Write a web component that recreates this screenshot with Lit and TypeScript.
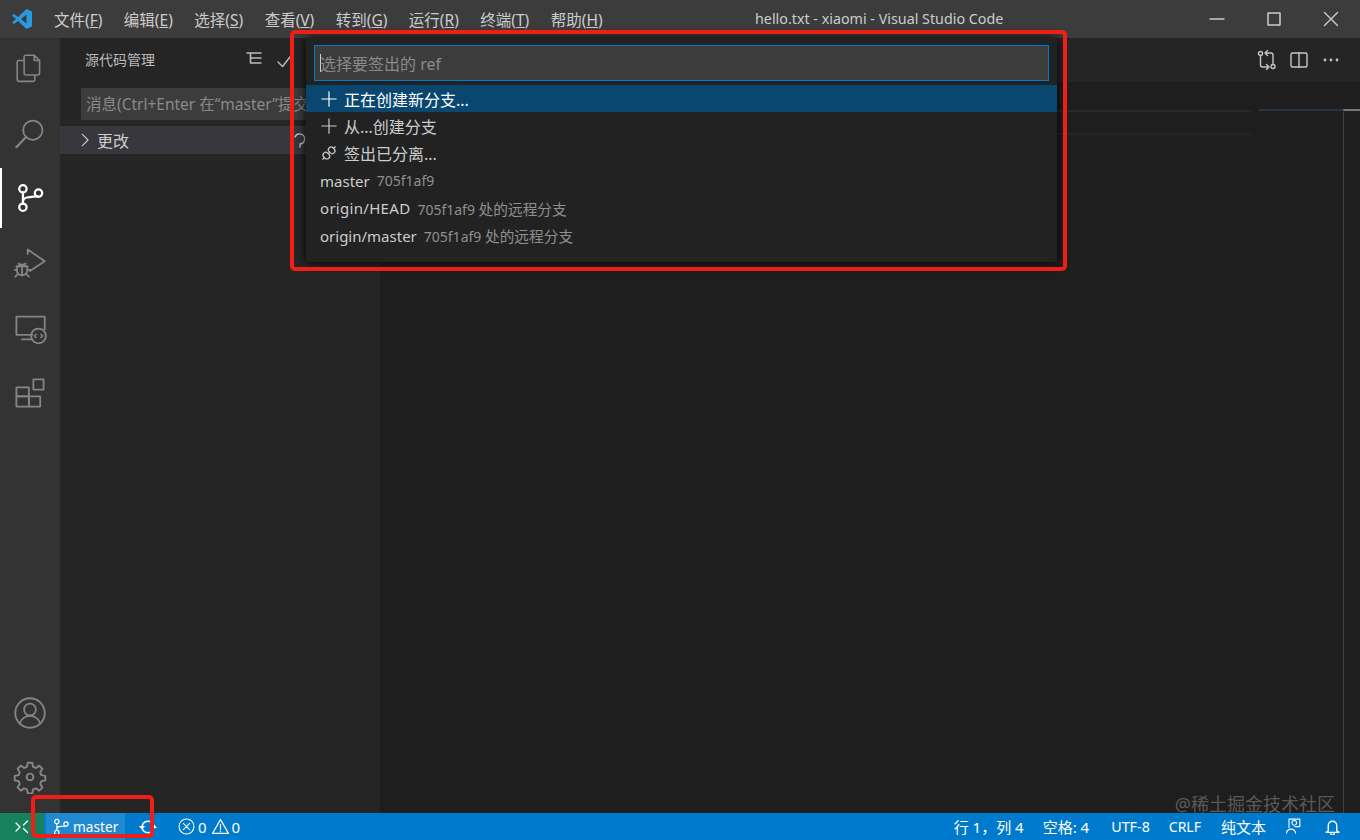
import { LitElement, html, css, svg } from "lit";
import { customElement } from "lit/decorators.js";

const I = (size: number, body: unknown, vb = 24) => html`<svg class="ic" width=${size} height=${size} viewBox="0 0 ${vb} ${vb}" fill="none" stroke="currentColor" stroke-width="1.2" stroke-linecap="round" stroke-linejoin="round">${body}</svg>`;

const branch = svg`<circle cx="7" cy="5.500" r="2.600"/><circle cx="7" cy="18.500" r="2.600"/><circle cx="18" cy="8.500" r="2.600"/><path d="M7 8v8M7 15c0-3 2-3.500 5-3.700 3-.2 5-.7 6-.2"/>`;

@customElement("app-root")
export class AppRoot extends LitElement {
  static styles = css`
    :host { display: block; width: 1360px; height: 840px; position: relative; overflow: hidden; font-family: "Noto Sans", "Noto Sans CJK SC", sans-serif; color: #ccc; background: #1e1e1e; }
    .ic { display: block; flex: none; }
    .title { height: 38px; background: #3c3c3c; display: flex; align-items: center; position: relative; font-size: 14px; color: #ccc; }
    .logo { width: 54px; padding-left: 11px; box-sizing: border-box; }
    .menu { display: flex; gap: 21.500px; font-size: 15.500px; }
    .menu span { white-space: nowrap; }
    .menu u { text-underline-offset: 1px; }
    .wintitle { position: absolute; left: 755px; top: 9px; font-size: 14.300px; line-height: 19px; color: #ccc; white-space: nowrap; }
    .winbtns { position: absolute; right: 1px; top: 0; display: flex; height: 38px; align-items: center; }
    .winbtns div { width: 57px; display: flex; justify-content: center; color: #ccc; }
    .main { display: flex; height: 775px; }
    .activity { width: 60px; background: #333; display: flex; flex-direction: column; color: #858585; flex: none; }
    .act { height: 65px; display: flex; align-items: center; justify-content: center; position: relative; flex: none; }
    .act .ic { margin-top: -6px; }
    .act.low .ic { margin-top: 4px; }
    .act.on { color: #fff; }
    .act.on::before { content: ""; position: absolute; left: 0; top: 0; bottom: 5px; width: 2px; background: #fff; }
    .spacer { flex: 1; }
    .side { width: 320px; background: #252526; display: flex; flex-direction: column; flex: none; }
    .sidehead { height: 44px; box-sizing: border-box; padding: 0 0 2px 25px; display: flex; align-items: center; font-size: 14px; position: relative; color: #bbb; }
    .t1 { position: absolute; left: 186px; top: 13px; }
    .t2 { position: absolute; left: 217px; top: 15px; }
    .input { margin: 6px 0 0 21px; height: 32px; background: #3c3c3c; font-size: 15.500px; line-height: 32px; color: #8a8a8a; padding-left: 5px; white-space: nowrap; overflow: hidden; }
    .changes { margin-top: 6px; height: 28px; background: #37373d; display: flex; align-items: center; font-size: 16px; color: #ccc; padding-left: 18px; gap: 5px; position: relative; }
    .undo { position: absolute; left: 231px; top: 6px; }
    .editor { flex: 1; display: flex; flex-direction: column; position: relative; background: #1e1e1e; }
    .tabs { height: 44px; background: #252526; display: flex; justify-content: flex-end; align-items: center; gap: 12px; padding-right: 19px; color: #c5c5c5; flex: none; }
    .crumb { height: 28px; flex: none; }
    .line { height: 2px; background: #292929; flex: none; width: 871px; }
    .line.two { margin-top: 21px; background: #262626; }
    .rtop { position: absolute; left: 879px; right: 17px; top: 71px; height: 2px; background: #2a3340; }
    .rtop2 { position: absolute; right: 0; top: 71px; width: 17px; height: 2px; background: #777; }
    .ruler { position: absolute; right: 16px; top: 72px; bottom: 0; width: 1px; background: #404040; }
    .status { height: 27px; background: #007acc; display: flex; align-items: center; font-size: 14px; color: #fff; position: relative; }
    .remote { width: 44px; height: 27px; background: #16825d; display: flex; align-items: center; justify-content: center; flex: none; }
    .st-branch { height: 27px; margin-left: 2px; width: 79px; background: #1f8ad2; display: flex; align-items: center; padding-left: 5px; gap: 2px; box-sizing: border-box; flex: none; font-size: 13.700px; }
    .st-sync { margin-left: 13px; flex: none; }
    .st-err { margin-left: 20px; display: flex; align-items: center; gap: 3px; font-size: 15px; }
    .st-err .warn { margin-left: 2px; }
    .st-right { margin-left: auto; display: flex; align-items: center; height: 27px; }
    .st-right span { white-space: nowrap; }
    .st-right .cjk { font-size: 15px; }
    .st-right .utf { font-size: 14.300px; }
    .m18 { margin-right: 18px; }
    .m19 { margin-right: 19px; }
    .m20 { margin-right: 20px; }
    .m22 { margin-right: 22px; }
    .watermark { position: absolute; right: 25px; top: 794px; font-size: 18px; line-height: 20px; color: rgba(128,128,128,.62); white-space: nowrap; }
    .qp { position: absolute; left: 306px; top: 38px; width: 751px; height: 224px; background: #222223; box-shadow: 0 0 10px #000; }
    .qp-in { margin: 7px 8px 0 8px; height: 36px; box-sizing: border-box; border: 1px solid #007acc; background: #3c3c3c; display: flex; align-items: center; padding-left: 5px; font-size: 16px; color: #8a8a8a; }
    .caret { width: 1px; height: 18px; background: #ccc; margin-right: -1px; flex: none; }
    .rows { margin-top: 4px; }
    .row { height: 27.400px; display: flex; align-items: center; padding-left: 14px; font-size: 15px; color: #ccc; white-space: nowrap; }
    .row.big { font-size: 16px; }
    .row.sel { background: #094771; color: #fff; }
    .row .i { width: 24px; flex: none; display: flex; }
    .row .wide { letter-spacing: .3px; }
    .row em { font-style: normal; color: #8f8f8f; margin-left: 7px; font-size: 14px; }
    .row em b { font-weight: 400; font-size: 14.700px; }
    .red { position: absolute; border: 4px solid #f01e14; border-radius: 5px; box-sizing: border-box; pointer-events: none; }
    .red.a { left: 290px; top: 30px; width: 777px; height: 241px; }
    .red.b { left: 31px; top: 795px; width: 123px; height: 43px; }
  `;

  render() {
    const plus = I(18, svg`<path d="M12 2.500v19M2.500 12h19" stroke-width="1.600"/>`);
    const plug = I(18, svg`<g transform="rotate(-45 9 9)" stroke-width="1.200"><rect x="2.500" y="5.500" width="5.500" height="7" rx="2.600"/><rect x="10" y="5.500" width="5.500" height="7" rx="2.600"/><path d="M8 9h2M.2 9h2.300M15.500 9h2.300"/></g>`, 18);
    return html`
      <div class="title">
        <div class="logo"><svg class="ic" width="22" height="22" viewBox="0 0 22 22"><path d="M15.500 1L21 3.500v15L15.500 21 7 13l-4 3-2-1.500L5 11 1 7.500 3 6l4 3z" fill="#2a9ae0"/><path d="M15.500 6.500L10 11l5.500 4.500z" fill="#3c3c3c"/></svg></div>
        <div class="menu">
          <span>文件(<u>F</u>)</span><span>编辑(<u>E</u>)</span><span>选择(<u>S</u>)</span><span>查看(<u>V</u>)</span><span>转到(<u>G</u>)</span><span>运行(<u>R</u>)</span><span>终端(<u>T</u>)</span><span>帮助(<u>H</u>)</span>
        </div>
        <div class="wintitle">hello.txt - xiaomi - Visual Studio Code</div>
        <div class="winbtns">
          <div>${I(16, svg`<path d="M1 8h14" stroke-width="1.300"/>`, 16)}</div>
          <div>${I(14, svg`<rect x="1" y="1" width="12" height="12" stroke-width="1.500"/>`, 14)}</div>
          <div>${I(16, svg`<path d="M1.500 1.500l13 13M14.500 1.500l-13 13" stroke-width="1.400"/>`, 16)}</div>
        </div>
      </div>
      <div class="main">
        <div class="activity">
          <div class="act">${I(32, svg`<g stroke-width="1.500"><path d="M11 3h8l5 5v12a1.500 1.500 0 0 1-1.500 1.500H19.500M19 3v5h5M11 3a1.500 1.500 0 0 0-1.500 1.500V8H4.500A1.500 1.500 0 0 0 3 9.500V26a1.500 1.500 0 0 0 1.500 1.500H18a1.500 1.500 0 0 0 1.500-1.500v-4.500H11a1.500 1.500 0 0 1-1.500-1.500V8"/></g>`, 30)}</div>
          <div class="act">${I(34, svg`<g stroke-width="1.600"><circle cx="17.500" cy="12.500" r="8.500"/><path d="M11.500 18.500L3 27.500" stroke-width="2"/></g>`, 30)}</div>
          <div class="act on">${I(34, svg`<g stroke-width="1.600">${branch}</g>`)}</div>
          <div class="act">${I(34, svg`<g stroke-width="1.600"><path d="M13 7V3l15 10.500L15 22"/><circle cx="8" cy="21" r="4.800"/><path d="M5 15.500l2 1.500M11 15.500l-2 1.500M1.500 21h2M12.500 21h3M2 27l2-2M14 27l-2-2M3 18h10M8 18v8"/></g>`, 30)}</div>
          <div class="act">${I(34, svg`<g stroke-width="1.600"><path d="M17 21H3V5h25v11M8 25h8"/><circle cx="22.500" cy="22" r="6.500"/><path d="M20.500 20.500l-1.800 1.500 1.800 1.500M24.500 20.500l1.800 1.500-1.800 1.500" stroke-width="1.200"/></g>`, 30)}</div>
          <div class="act">${I(34, svg`<g stroke-width="1.600"><rect x="3" y="10" width="11" height="8"/><rect x="3" y="18" width="11" height="9"/><rect x="14" y="18" width="10" height="9"/><rect x="18" y="3" width="9" height="9"/></g>`, 30)}</div>
          <div class="spacer"></div>
          <div class="act low" style="height:64px">${I(34, svg`<g stroke-width="1.600"><circle cx="15" cy="15" r="13"/><circle cx="15" cy="12" r="5.200"/><path d="M6 24.500c1-4.500 5-7 9-7s8 2.500 9 7"/></g>`, 30)}</div>
          <div class="act low" style="height:70px;padding-bottom:6px;box-sizing:border-box">${I(34, svg`<g stroke-width="1.700"><circle cx="15" cy="15" r="3"/><path d="M13 2.500h4l.7 3.500 2.500 1 3-2 2.800 2.800-2 3 1 2.500 3.500.7v4l-3.500.7-1 2.500 2 3-2.800 2.800-3-2-2.500 1-.7 3.500h-4l-.7-3.500-2.500-1-3 2-2.800-2.800 2-3-1-2.500-3.500-.7v-4l3.500-.7 1-2.500-2-3 2.800-2.800 3 2 2.500-1z"/></g>`, 30)}</div>
        </div>
        <div class="side">
          <div class="sidehead">源代码管理
            <span class="t1">${I(16, svg`<path d="M1 2h14M4.500 7h10.500M4.500 12h10.500M4.500 2v10" stroke-width="1.600"/>`, 16)}</span>
            <span class="t2">${I(16, svg`<path d="M1 9l4.500 4.500L15 1.500" stroke-width="1.400"/>`, 16)}</span>
          </div>
          <div class="input">消息(Ctrl+Enter 在“master”提交)</div>
          <div class="changes">${I(14, svg`<path d="M5 1.500L11.500 8 5 14.500" stroke-width="1.300"/>`, 16)}<span>更改</span>
            <span class="undo">${I(16, svg`<path d="M4 5a5 5 0 1 1 5 7v3" stroke-width="1.300"/>`, 16)}</span>
          </div>
        </div>
        <div class="editor">
          <div class="tabs">
            ${I(20, svg`<g stroke-width="1.400"><circle cx="3.500" cy="3.500" r="2"/><circle cx="16" cy="16.500" r="2"/><path d="M3.500 5.500v9.500a2 2 0 0 0 2 2h6M9.500 14.500l2.500 2.500-2.500 2.500M16 14.500V5a2 2 0 0 0-2-2H8.500M10.500 .5L8 3l2.500 2.500"/></g>`, 20)}
            ${I(20, svg`<rect x="2" y="3" width="16" height="14" rx="1.500" stroke-width="1.400"/><path d="M10 3v14" stroke-width="1.400"/>`, 20)}
            ${I(20, svg`<circle cx="4" cy="10" r=".8" fill="currentColor"/><circle cx="10" cy="10" r=".8" fill="currentColor"/><circle cx="16" cy="10" r=".8" fill="currentColor"/>`, 20)}
          </div>
          <div class="crumb"></div>
          <div class="line"></div>
          <div class="line two"></div>
          <div class="rtop"></div><div class="rtop2"></div><div class="ruler"></div>
        </div>
      </div>
      <div class="status">
        <div class="remote">${I(16, svg`<path d="M2 4l4 4-4 4M13.500 2L9.500 6M9.500 9.500l4 4" stroke-width="1.300"/>`, 16)}</div>
        <div class="st-branch">${I(20, svg`<g stroke-width="1.400">${branch}</g>`)}<span>master</span></div>
        <div class="st-sync">${I(20, svg`<path d="M4.300 8.500a6 6 0 0 1 11.400 0M15.700 11.500a6 6 0 0 1-11.400 0" stroke-width="1.500"/><path d="M.8 9h6.400L4 12.500zM19.200 11h-6.400L16 7.500z" fill="currentColor" stroke="none"/>`, 20)}</div>
        <div class="st-err">
          ${I(17, svg`<circle cx="8" cy="8" r="7" stroke-width="1"/><path d="M5 5l6 6M11 5l-6 6" stroke-width="1"/>`, 16)}<span>0</span>
          <span class="warn">${I(17, svg`<path d="M8 1.500L15.500 14.500H.5zM8 6v5M8 12.500v.5" stroke-width="1.100"/>`, 16)}</span><span>0</span>
        </div>
        <div class="st-right">
          <span class="cjk m19">行 1，列 4</span>
          <span class="cjk m22">空格: 4</span>
          <span class="utf m19">UTF-8</span>
          <span class="m20">CRLF</span>
          <span class="cjk m18">纯文本</span>
          <span class="m20">${I(20, svg`<path d="M6 13V3h13v9h-6M9.500 7.500a2.800 2.800 0 1 1 0 .01M3 20c.3-3 2.500-5 5.500-5s5 2 5.500 5" stroke-width="1.300" transform="translate(0 -.5)"/>`)}</span>
          <span class="m19">${I(17, svg`<path d="M4 12V7a4 4 0 0 1 8 0v5l2 1.500H2zM6.500 14.500a1.500 1.500 0 0 0 3 0" stroke-width="1.300"/>`, 16)}</span>
        </div>
      </div>
      <div class="watermark">@稀土掘金技术社区</div>
      <div class="qp">
        <div class="qp-in"><div class="caret"></div><span>选择要签出的 ref</span></div>
        <div class="rows">
          <div class="row big sel"><span class="i">${plus}</span>正在创建新分支...</div>
          <div class="row big"><span class="i">${plus}</span>从...创建分支</div>
          <div class="row big"><span class="i">${plug}</span>签出已分离...</div>
          <div class="row">master<em>705f1af9</em></div>
          <div class="row"><span class="wide">origin/HEAD</span><em>705f1af9 <b>处的远程分支</b></em></div>
          <div class="row">origin/master<em>705f1af9 <b>处的远程分支</b></em></div>
        </div>
      </div>
      <div class="red a"></div>
      <div class="red b"></div>
    `;
  }
}
